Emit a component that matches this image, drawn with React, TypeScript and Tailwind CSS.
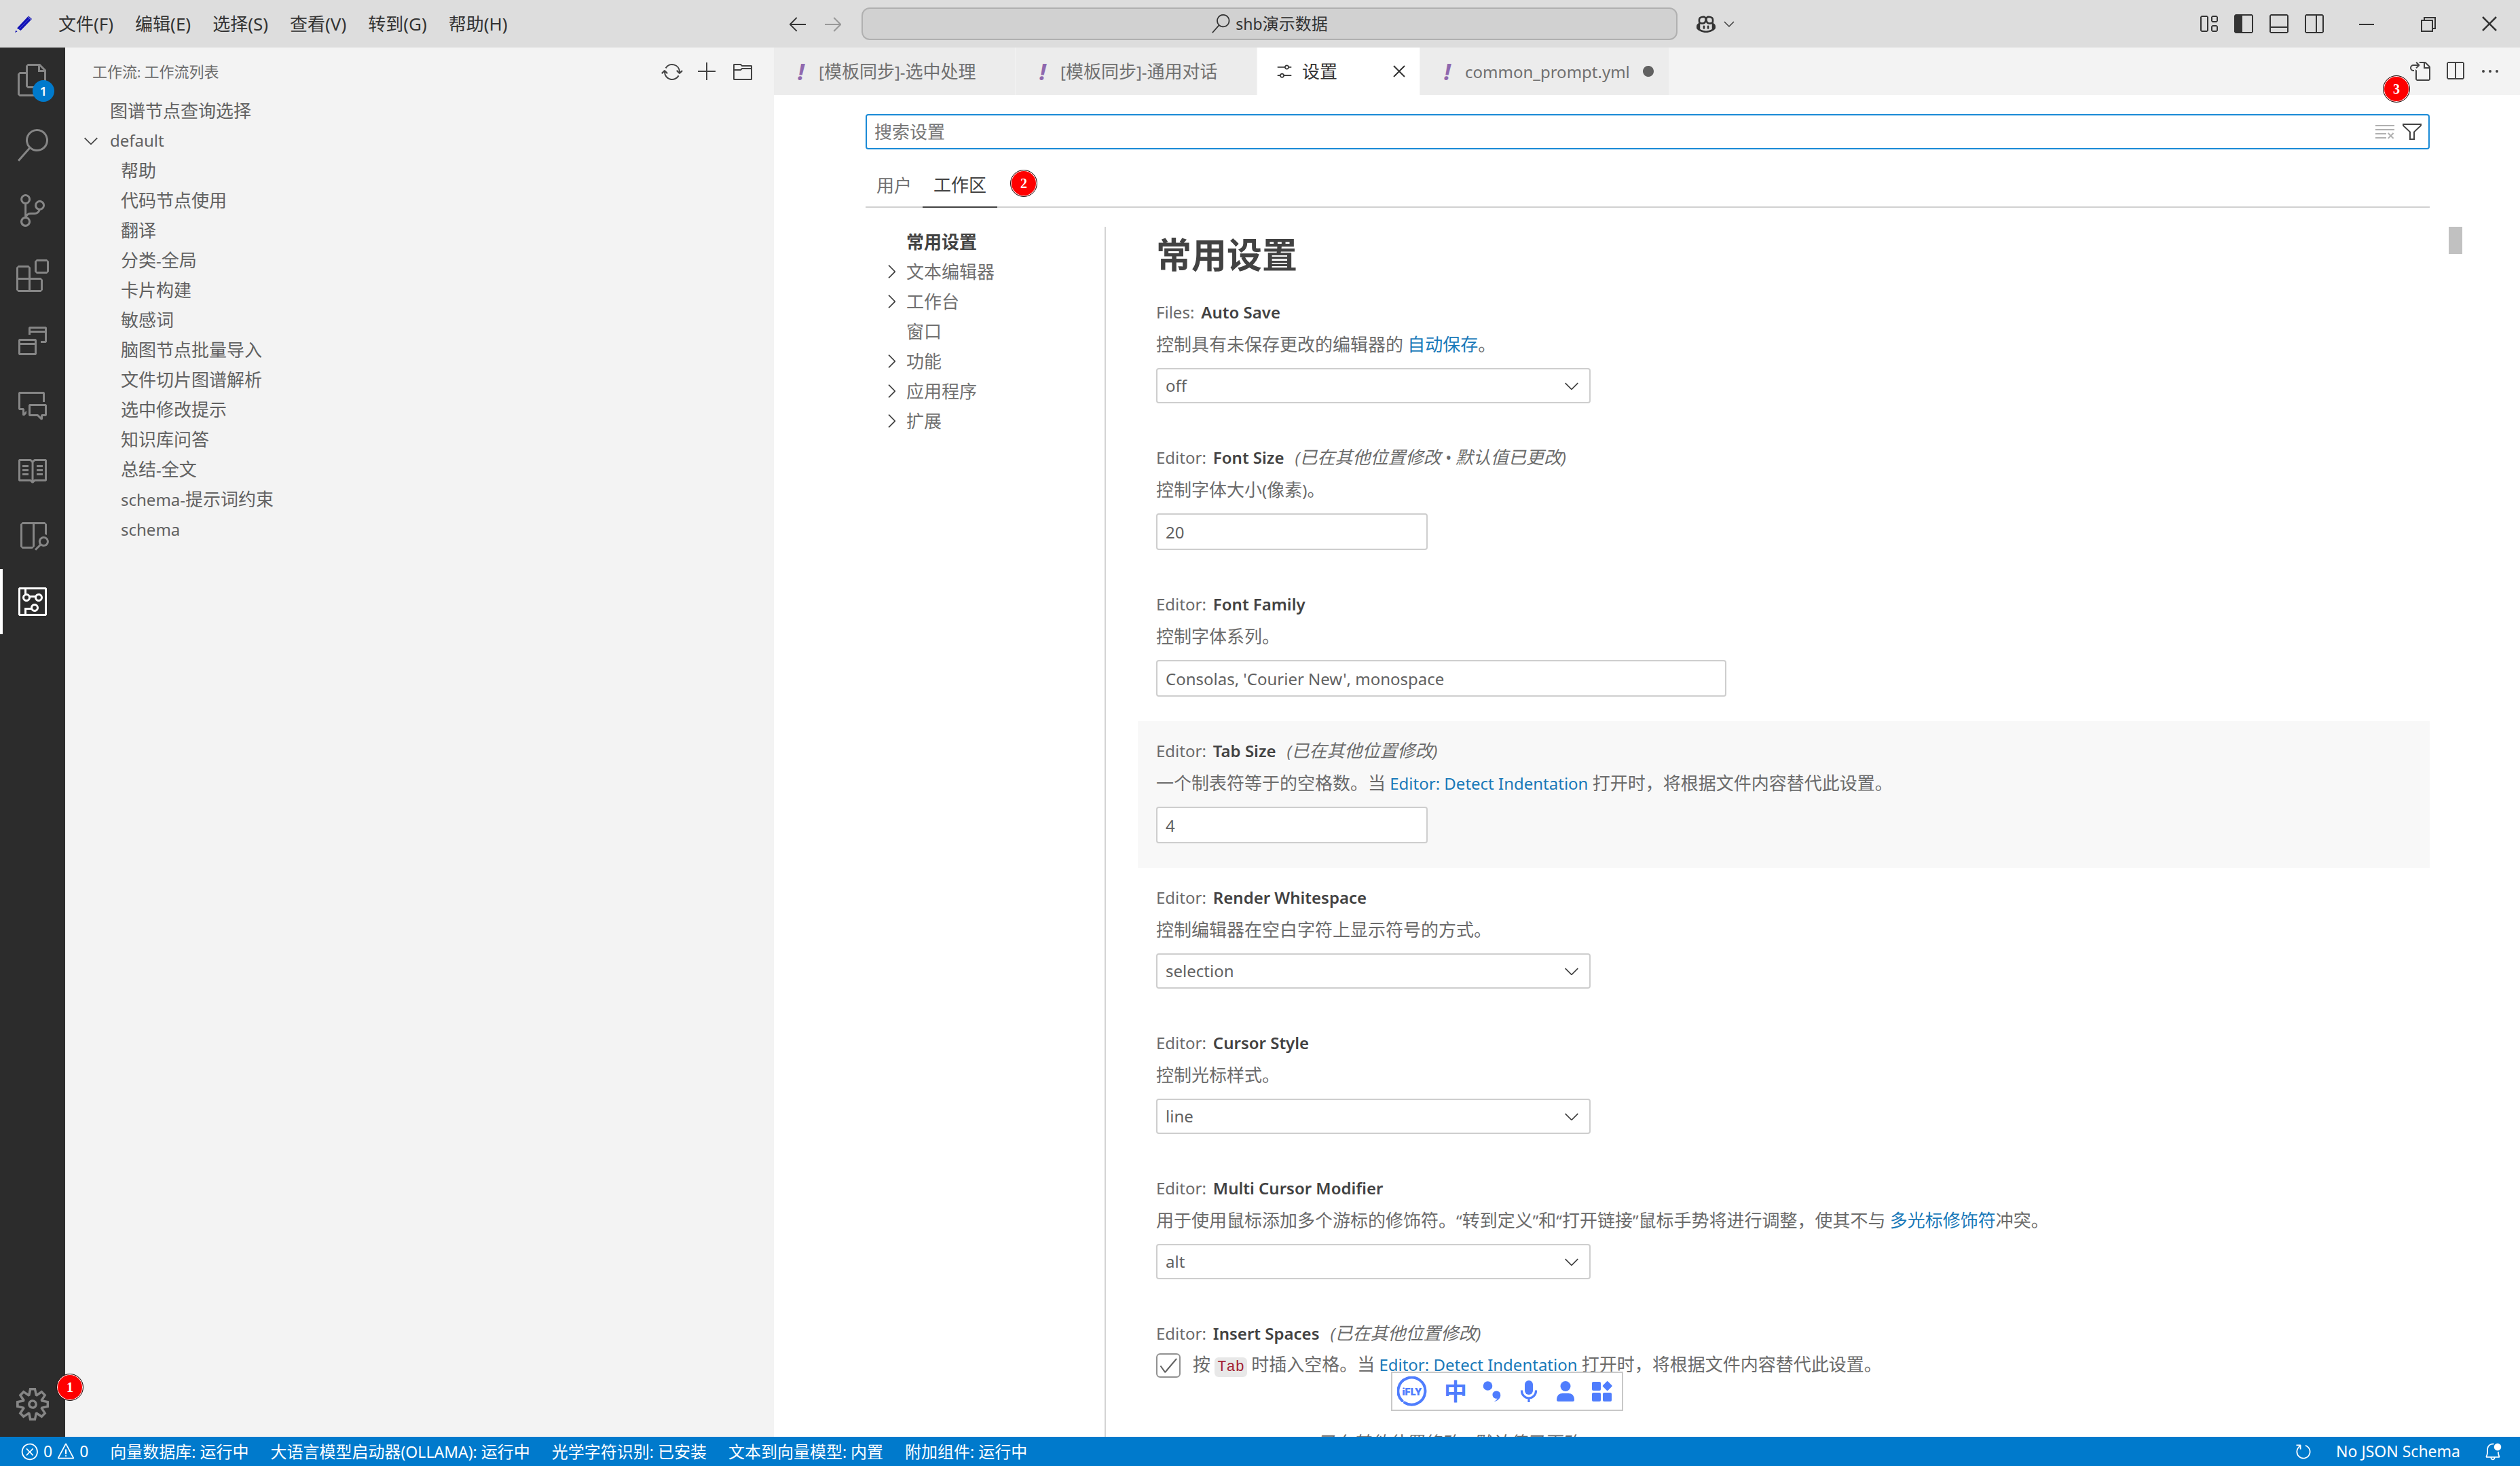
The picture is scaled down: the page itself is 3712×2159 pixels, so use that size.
import React from "react";
import type { ReactNode } from "react";
import type { IconType } from "react-icons";
import {
  VscAdd,
  VscArrowLeft,
  VscArrowRight,
  VscBellDot,
  VscBook,
  VscCheck,
  VscChevronDown,
  VscChevronRight,
  VscChromeClose,
  VscChromeMinimize,
  VscChromeRestore,
  VscCircleFilled,
  VscCircuitBoard,
  VscClearAll,
  VscClose,
  VscCommentDiscussion,
  VscCopilot,
  VscEllipsis,
  VscError,
  VscExtensions,
  VscFiles,
  VscFilter,
  VscFolder,
  VscGoToFile,
  VscLayout,
  VscLayoutPanelOff,
  VscLayoutSidebarLeft,
  VscLayoutSidebarRightOff,
  VscMultipleWindows,
  VscOpenPreview,
  VscRefresh,
  VscSearch,
  VscSettings,
  VscSettingsGear,
  VscSourceControl,
  VscSplitHorizontal,
  VscSync,
  VscWarning,
} from "react-icons/vsc";

/* Latin runs are set one step smaller than the Chinese text around them. */
function Mixed({ text, latin = "text-[24px]" }: { text: string; latin?: string }) {
  const parts = text.split(/([\x20-\x7e“”•]+)/);
  return (
    <>
      {parts.map((part, i) =>
        i % 2 === 1 ? (
          <span key={i} className={latin}>
            {part}
          </span>
        ) : (
          part
        ),
      )}
    </>
  );
}

function IconButton({ icon: Icon, label, className = "" }: { icon: IconType; label: string; className?: string }) {
  return (
    <button type="button" aria-label={label} className={`flex size-11 shrink-0 items-center justify-center ${className}`}>
      <Icon className="size-8" />
    </button>
  );
}

function StepBadge({ n, className = "" }: { n: number; className?: string }) {
  return (
    <span
      className={`flex size-10 items-center justify-center rounded-full border border-[#1a1a1a] bg-[#fe0000] font-['Liberation_Serif',serif] text-[20px] leading-none font-bold text-white shadow-[inset_0_0_0_1px_#fff] ${className}`}
    >
      {n}
    </span>
  );
}

function Logo() {
  return (
    <svg viewBox="0 0 26 26" className="size-[26px]" aria-hidden="true">
      <path d="M3 19.500 20 1.500l5 4.500L8.500 23z" fill="#1112b4" />
      <path d="M6.500 20.500 22 4.500" stroke="#4a4be0" strokeWidth="1" />
      <path d="M19 2.500l5.500 5" stroke="#dddddd" strokeWidth="0.800" />
      <path d="M0 26l1.500-3.500 2 2z" fill="#1112b4" />
    </svg>
  );
}

const menus = ["文件(F)", "编辑(E)", "选择(S)", "查看(V)", "转到(G)", "帮助(H)"];

function TitleBar() {
  return (
    <header className="grid h-[70px] shrink-0 grid-cols-[1fr_minmax(0,1406px)_1fr] items-center bg-[#dddddd] text-[#333333]">
      <div className="flex items-center">
        <span className="flex w-[70px] justify-center">
          <Logo />
        </span>
        <nav className="flex">
          {menus.map((m) => (
            <button key={m} type="button" className="px-4 whitespace-nowrap">
              {m}
            </button>
          ))}
        </nav>
      </div>
      <div className="flex items-center">
        <IconButton icon={VscArrowLeft} label="后退" />
        <IconButton icon={VscArrowRight} label="前进" className="ml-2 opacity-40" />
        <button
          type="button"
          className="mr-7 ml-5 flex h-12 flex-1 items-center justify-center gap-2 rounded-xl border-2 border-[#b0b0b0] bg-[#d1d1d1] text-[24px]"
        >
          <VscSearch className="size-7" />
          <span>
            <Mixed text="shb演示数据" latin="text-[23px]" />
          </span>
        </button>
        <button type="button" aria-label="Copilot" className="flex items-center gap-2">
          <VscCopilot className="size-7" />
          <VscChevronDown className="size-6" />
        </button>
      </div>
      <div className="flex h-full items-center justify-end">
        <div className="mr-2 flex gap-2">
          <IconButton icon={VscLayout} label="自定义布局" />
          <IconButton icon={VscLayoutSidebarLeft} label="切换主侧栏" />
          <IconButton icon={VscLayoutPanelOff} label="切换面板" />
          <IconButton icon={VscLayoutSidebarRightOff} label="切换辅助侧栏" />
        </div>
        {[
          { icon: VscChromeMinimize, label: "最小化" },
          { icon: VscChromeRestore, label: "还原" },
          { icon: VscChromeClose, label: "关闭" },
        ].map(({ icon: Icon, label }) => (
          <button key={label} type="button" aria-label={label} className="flex h-full w-[91px] items-center justify-center">
            <Icon className="size-8" />
          </button>
        ))}
      </div>
    </header>
  );
}

const activities: { icon: IconType; label: string; badge?: number; active?: boolean }[] = [
  { icon: VscFiles, label: "资源管理器", badge: 1 },
  { icon: VscSearch, label: "搜索" },
  { icon: VscSourceControl, label: "源代码管理" },
  { icon: VscExtensions, label: "扩展" },
  { icon: VscMultipleWindows, label: "窗口" },
  { icon: VscCommentDiscussion, label: "对话" },
  { icon: VscBook, label: "知识库" },
  { icon: VscOpenPreview, label: "预览" },
  { icon: VscCircuitBoard, label: "工作流", active: true },
];

function ActivityBar() {
  return (
    <nav className="flex w-24 shrink-0 flex-col bg-[#2c2c2c] text-[#868686]">
      {activities.map(({ icon: Icon, label, badge, active }) => (
        <button
          key={label}
          type="button"
          aria-label={label}
          className={`relative flex h-24 items-center justify-center border-x-4 border-r-transparent ${
            active ? "border-l-white text-white" : "border-l-transparent"
          }`}
        >
          <Icon className="size-12" />
          {badge && (
            <span className="absolute top-12 left-11 flex size-8 items-center justify-center rounded-full bg-[#007acc] text-[18px] font-semibold text-white">
              {badge}
            </span>
          )}
        </button>
      ))}
      <button type="button" aria-label="管理" className="relative mt-auto flex h-24 items-center justify-center">
        <VscSettingsGear className="size-12" />
        <StepBadge n={1} className="absolute top-[3px] left-[83px] z-10" />
      </button>
    </nav>
  );
}

const workflows = [
  "帮助",
  "代码节点使用",
  "翻译",
  "分类-全局",
  "卡片构建",
  "敏感词",
  "脑图节点批量导入",
  "文件切片图谱解析",
  "选中修改提示",
  "知识库问答",
  "总结-全文",
  "schema-提示词约束",
  "schema",
];

function SideBar() {
  return (
    <aside className="w-[1044px] shrink-0 bg-[#f3f3f3] text-[#616161]">
      <div className="flex h-[71px] items-center pr-6 pl-10 text-[#424242]">
        <h2 className="flex-1 text-[22px] text-[#6c6c6c]">
          <Mixed text="工作流: 工作流列表" latin="text-[20px]" />
        </h2>
        <div className="flex gap-2">
          <IconButton icon={VscSync} label="刷新" />
          <IconButton icon={VscAdd} label="新建" />
          <IconButton icon={VscFolder} label="打开目录" />
        </div>
      </div>
      <ul className="flex flex-col">
        <li className="flex h-11 items-center pl-[66px]">图谱节点查询选择</li>
        <li className="flex h-11 items-center gap-3 pl-[22px]">
          <VscChevronDown className="size-8 text-[#424242]" />
          <Mixed text="default" />
        </li>
        {workflows.map((w) => (
          <li key={w} className="flex h-11 items-center pl-[82px]">
            <span>
              <Mixed text={w} />
            </span>
          </li>
        ))}
      </ul>
    </aside>
  );
}

const yml = <span className="text-[34px] leading-none font-bold text-[#8f68ae] italic">!</span>;

const tabs: { title: string; width: string; icon: ReactNode; active?: boolean; dirty?: boolean }[] = [
  { title: "[模板同步]-选中处理", width: "w-[356px]", icon: yml },
  { title: "[模板同步]-通用对话", width: "w-[356px]", icon: yml },
  { title: "设置", width: "w-[240px]", icon: <VscSettings className="size-7" />, active: true },
  { title: "common_prompt.yml", width: "w-[367px]", icon: yml, dirty: true },
];

function TabStrip() {
  return (
    <div className="flex h-[70px] shrink-0 bg-[#f3f3f3]">
      {tabs.map((t) => (
        <div
          key={t.title}
          className={`flex items-center border-r border-[#f3f3f3] pl-5 ${t.width} ${
            t.active ? "bg-white text-[#333333]" : "bg-[#ececec] text-[#707070]"
          }`}
        >
          <span className="flex w-10 justify-center">{t.icon}</span>
          <button type="button" className="ml-1.5 flex-1 text-left whitespace-nowrap">
            <Mixed text={t.title} />
          </button>
          {t.active && <IconButton icon={VscClose} label="关闭" className="mr-2" />}
          {t.dirty && (
            <button type="button" aria-label="未保存" className="mr-2 flex size-11 items-center justify-center text-[#616161]">
              <VscCircleFilled className="size-8" />
            </button>
          )}
        </div>
      ))}
      <div className="relative ml-auto flex items-center gap-2 pr-[22px] text-[#424242]">
        <IconButton icon={VscGoToFile} label="打开设置(json)" />
        <IconButton icon={VscSplitHorizontal} label="拆分编辑器" />
        <IconButton icon={VscEllipsis} label="更多操作" />
        <StepBadge n={3} className="absolute top-[41px] -left-8 z-10" />
      </div>
    </div>
  );
}

const toc = [
  { label: "常用设置", current: true },
  { label: "文本编辑器", expandable: true },
  { label: "工作台", expandable: true },
  { label: "窗口" },
  { label: "功能", expandable: true },
  { label: "应用程序", expandable: true },
  { label: "扩展", expandable: true },
];

function Toc() {
  return (
    <nav className="w-[354px] shrink-0 border-r-2 border-[#d4d4d4]">
      <ul>
        {toc.map((t) => (
          <li
            key={t.label}
            className={`flex h-11 items-center gap-1.5 pl-[22px] ${t.current ? "font-bold text-[#424242]" : "text-[#707070]"}`}
          >
            <span className="flex w-8 text-[#424242]">{t.expandable && <VscChevronRight className="size-8" />}</span>
            {t.label}
          </li>
        ))}
      </ul>
    </nav>
  );
}

function Setting({
  id,
  category,
  name,
  note,
  description,
  focused,
  children,
}: {
  id: string;
  category: string;
  name: string;
  note?: string;
  description?: ReactNode;
  focused?: boolean;
  children?: ReactNode;
}) {
  return (
    <section className={`pt-6 pb-9 pl-[27px] ${focused ? "bg-[#f8f8f8]" : ""}`}>
      <div className="h-[38px] leading-[38px] whitespace-nowrap text-[#6b6b6b]">
        <label htmlFor={id} className="text-[24px]">
          <span className="mr-2.5">{category}:</span>
          <span className="font-semibold text-[#424242]">{name}</span>
        </label>
        {note && (
          <span className="ml-4 italic">
            <Mixed text={note} />
          </span>
        )}
      </div>
      {description && <p className="mt-[11px] h-9 leading-9 whitespace-nowrap text-[#6b6b6b]">{description}</p>}
      {children}
    </section>
  );
}

function Link({ children }: { children: ReactNode }) {
  return (
    <a href="#" className="text-[#1979b9]">
      {children}
    </a>
  );
}

function SelectBox({ id, value }: { id: string; value: string }) {
  return (
    <div className="relative mt-[17px] w-[640px] max-w-full">
      <select
        id={id}
        defaultValue={value}
        className="block h-[52px] w-full appearance-none rounded-sm border-2 border-[#cecece] bg-white px-3 text-[24px] text-[#616161]"
      >
        <option>{value}</option>
      </select>
      <VscChevronDown className="pointer-events-none absolute top-2.5 right-3 size-8 text-[#424242]" />
    </div>
  );
}

function TextBox({ id, value, width }: { id: string; value: string; width: string }) {
  return (
    <input
      id={id}
      type="text"
      defaultValue={value}
      className={`mt-[17px] block h-[54px] max-w-full rounded-sm border-2 border-[#cecece] bg-white px-3 text-[24px] text-[#616161] ${width}`}
    />
  );
}

function SettingsList() {
  return (
    <div className="ml-[47px] min-w-0 flex-1 overflow-hidden">
      <h1 className="pl-[27px] text-[52px] leading-[82px] font-bold text-[#424242]">常用设置</h1>
      <Setting
        id="autoSave"
        category="Files"
        name="Auto Save"
        description={
          <>
            <Mixed text="控制具有未保存更改的编辑器的 " />
            <Link>自动保存</Link>。
          </>
        }
      >
        <SelectBox id="autoSave" value="off" />
      </Setting>
      <Setting
        id="fontSize"
        category="Editor"
        name="Font Size"
        note="(已在其他位置修改 • 默认值已更改)"
        description={<Mixed text="控制字体大小(像素)。" />}
      >
        <TextBox id="fontSize" value="20" width="w-[400px]" />
      </Setting>
      <Setting id="fontFamily" category="Editor" name="Font Family" description="控制字体系列。">
        <TextBox id="fontFamily" value="Consolas, 'Courier New', monospace" width="w-[840px]" />
      </Setting>
      <Setting
        id="tabSize"
        category="Editor"
        name="Tab Size"
        note="(已在其他位置修改)"
        focused
        description={
          <>
            <Mixed text="一个制表符等于的空格数。当 " />
            <Link>
              <Mixed text="Editor: Detect Indentation" />
            </Link>
            <Mixed text=" 打开时，将根据文件内容替代此设置。" />
          </>
        }
      >
        <TextBox id="tabSize" value="4" width="w-[400px]" />
      </Setting>
      <Setting
        id="renderWhitespace"
        category="Editor"
        name="Render Whitespace"
        description="控制编辑器在空白字符上显示符号的方式。"
      >
        <SelectBox id="renderWhitespace" value="selection" />
      </Setting>
      <Setting id="cursorStyle" category="Editor" name="Cursor Style" description="控制光标样式。">
        <SelectBox id="cursorStyle" value="line" />
      </Setting>
      <Setting
        id="multiCursorModifier"
        category="Editor"
        name="Multi Cursor Modifier"
        description={
          <>
            <Mixed text="用于使用鼠标添加多个游标的修饰符。“转到定义”和“打开链接”鼠标手势将进行调整，使其不与 " />
            <Link>多光标修饰符</Link>冲突。
          </>
        }
      >
        <SelectBox id="multiCursorModifier" value="alt" />
      </Setting>
      <Setting id="insertSpaces" category="Editor" name="Insert Spaces" note="(已在其他位置修改)">
        <div className="mt-[11px] mb-4 flex h-9 items-center gap-[18px] text-[#6b6b6b]">
          <span className="relative size-9">
            <input
              id="insertSpaces"
              type="checkbox"
              defaultChecked
              className="block size-9 appearance-none rounded-md border-2 border-[#919191] bg-white"
            />
            <VscCheck className="pointer-events-none absolute top-0.5 left-0.5 size-8 text-[#616161]" />
          </span>
          <p className="leading-9 whitespace-nowrap">
            <Mixed text="按 " />
            <code className="rounded-md bg-[#e8e8e8] px-1 py-0.5 font-['Liberation_Mono',monospace] text-[22px] text-[#a31f34]">
              Tab
            </code>
            <Mixed text=" 时插入空格。当 " />
            <Link>
              <Mixed text="Editor: Detect Indentation" />
            </Link>
            <Mixed text=" 打开时，将根据文件内容替代此设置。" />
          </p>
        </div>
      </Setting>
      <Setting id="wordWrap" category="Editor" name="Word Wrap" note="(已在其他位置修改 • 默认值已更改)" />
    </div>
  );
}

function SettingsEditor() {
  return (
    <div className="flex min-h-0 flex-1 flex-col bg-white pt-7 pl-[135px]">
      <div className="mr-[133px] flex h-[52px] shrink-0 items-center gap-2 rounded-sm border-2 border-[#1a8ad6] pr-2 pl-[11px]">
        <input
          type="text"
          aria-label="搜索设置"
          placeholder="搜索设置"
          className="min-w-0 flex-1 outline-none placeholder:text-[#767676]"
        />
        <button type="button" aria-label="清除设置搜索输入" className="text-[#b0b0b0]">
          <VscClearAll className="size-8" />
        </button>
        <button type="button" aria-label="筛选设置" className="text-[#424242]">
          <VscFilter className="size-8" />
        </button>
      </div>
      <div className="mr-[133px] flex h-[86px] shrink-0 border-b-2 border-[#d0d0d0] pt-5">
        <button type="button" className="h-[66px] px-4 text-[#707070]">
          用户
        </button>
        <button type="button" className="h-[66px] border-b-2 border-[#424242] px-4 text-[#424242]">
          工作区
        </button>
        <StepBadge n={2} className="mt-2.5 ml-[19px]" />
      </div>
      <div className="flex min-h-0 flex-1 pt-7">
        <Toc />
        <SettingsList />
        <div className="w-[133px] shrink-0">
          <div className="ml-7 h-10 w-5 bg-[#c1c1c1]" />
        </div>
      </div>
    </div>
  );
}

const status = ["向量数据库: 运行中", "大语言模型启动器(OLLAMA): 运行中", "光学字符识别: 已安装", "文本到向量模型: 内置", "附加组件: 运行中"];

function StatusBar() {
  return (
    <footer className="flex h-[43px] shrink-0 items-center justify-between bg-[#007acc] pr-[26px] pl-[30px] text-[24px] leading-none whitespace-nowrap text-white">
      <div className="flex items-center gap-8">
        <button type="button" className="flex items-center gap-1.5 text-[23px]">
          <VscError className="size-7" />
          <span>0</span>
          <VscWarning className="size-7" />
          <span>0</span>
        </button>
        {status.map((s) => (
          <button key={s} type="button">
            <Mixed text={s} latin="text-[23px]" />
          </button>
        ))}
      </div>
      <div className="flex items-center gap-[34px]">
        <button type="button" aria-label="刷新">
          <VscRefresh className="size-7" />
        </button>
        <button type="button" className="text-[23px]">
          No JSON Schema
        </button>
        <button type="button" aria-label="通知">
          <VscBellDot className="size-7" />
        </button>
      </div>
    </footer>
  );
}

function ImeBar() {
  const cell = "flex w-[54px] items-center justify-center";
  return (
    <div className="fixed bottom-[81px] left-[2049px] z-20 flex h-[58px] w-[342px] items-center border-2 border-[#c8c8c8] bg-white text-[#4f7dfd]">
      <button type="button" className="relative mr-2 flex w-[58px] items-center justify-center">
        <svg viewBox="0 0 44 44" className="size-11" fill="none" stroke="currentColor" strokeWidth="4" aria-hidden="true">
          <path d="M7.500 36A20 20 0 1 1 11 38.700" strokeLinecap="round" />
        </svg>
        <span className="absolute font-['Inter',sans-serif] text-[14px] font-black">iFLY</span>
      </button>
      <button type="button" className={`${cell} text-[34px] leading-none font-bold`}>
        中
      </button>
      <button type="button" aria-label="标点" className={cell}>
        <svg viewBox="0 0 32 32" className="size-8" fill="currentColor" aria-hidden="true">
          <circle cx="9.500" cy="8" r="6.800" />
          <path d="M22.500 15.500a5.700 5.700 0 0 1 5.800 6.200c0 4.500-4 8.600-9.800 9.300 3-1.500 4.700-3 4.900-4.500a5.600 5.600 0 1 1-.9-11z" />
        </svg>
      </button>
      <button type="button" aria-label="语音" className={cell}>
        <svg viewBox="0 0 32 32" className="size-8" fill="currentColor" aria-hidden="true">
          <rect x="10" y="0" width="12" height="21" rx="6" />
          <path d="M5.500 14.500v1a10.500 10.500 0 0 0 21 0v-1M16 26v6" fill="none" stroke="currentColor" strokeWidth="3.200" />
        </svg>
      </button>
      <button type="button" aria-label="账户" className={cell}>
        <svg viewBox="0 0 32 32" className="size-8" fill="currentColor" aria-hidden="true">
          <circle cx="16" cy="8.500" r="7.500" />
          <path d="M3 28.500C3 22 7 19 11.500 19h9C25 19 29 22 29 28.500c0 1.700-.8 2.500-2.500 2.500h-21C3.800 31 3 30.200 3 28.500z" />
        </svg>
      </button>
      <button type="button" aria-label="工具" className={cell}>
        <svg viewBox="0 0 32 32" className="size-8" fill="currentColor" aria-hidden="true">
          <rect x="1" y="2" width="13" height="13" rx="2" />
          <rect x="1" y="18" width="13" height="13" rx="2" />
          <rect x="17" y="18" width="13" height="13" rx="2" />
          <path d="M22.800 1.500q.9-.9 1.800 0l5.700 5.700q.9.900 0 1.800l-5.700 5.700q-.9.900-1.800 0l-5.700-5.700q-.9-.9 0-1.800z" />
        </svg>
      </button>
    </div>
  );
}

export default function App() {
  return (
    <div className="flex h-screen flex-col overflow-hidden font-['Noto_Sans','Noto_Sans_CJK_SC',sans-serif] text-[26px]">
      <TitleBar />
      <div className="flex min-h-0 flex-1">
        <ActivityBar />
        <SideBar />
        <main className="flex min-w-0 flex-1 flex-col">
          <TabStrip />
          <SettingsEditor />
        </main>
      </div>
      <StatusBar />
      <ImeBar />
    </div>
  );
}
